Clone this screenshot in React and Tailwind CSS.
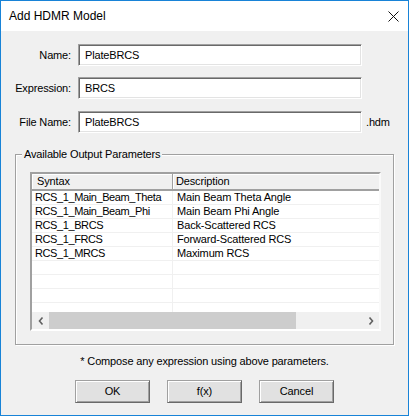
import React from "react";

const rows = [
  ["RCS_1_Main_Beam_Theta", "Main Beam Theta Angle"],
  ["RCS_1_Main_Beam_Phi", "Main Beam Phi Angle"],
  ["RCS_1_BRCS", "Back-Scattered RCS"],
  ["RCS_1_FRCS", "Forward-Scattered RCS"],
  ["RCS_1_MRCS", "Maximum RCS"],
  ["", ""],
  ["", ""],
  ["", ""],
  ["", ""],
];

const sunken =
  "border border-t-[#a0a0a0] border-l-[#a0a0a0] border-b-white border-r-white shadow-[inset_1px_1px_0_#696969,inset_-1px_-1px_0_#e3e3e3]";

function Field({ label, value, suffix }) {
  return (
    <div className="flex items-center">
      <div className="w-[70px] text-right">{label}</div>
      <div className={`ml-[7px] flex h-[22px] w-[284px] items-center bg-white pl-[6px] ${sunken}`}>{value}</div>
      {suffix && <div className="ml-[4px] pt-[1px]">{suffix}</div>}
    </div>
  );
}

function Arrow({ dir }) {
  return (
    <svg width="6" height="8" viewBox="0 0 6 8">
      {dir === "left" ? (
        <polyline points="4.5,0.5 1.5,4 4.5,7.5" fill="none" stroke="#606060" strokeWidth="1.6" />
      ) : (
        <polyline points="1.5,0.5 4.5,4 1.5,7.5" fill="none" stroke="#606060" strokeWidth="1.6" />
      )}
    </svg>
  );
}

function Button({ children }) {
  return (
    <button
      type="button"
      className="flex h-[23px] w-[75px] items-center justify-center border border-[#a0a0a0] border-b-[#696969] border-r-[#696969] bg-[#e1e1e1] shadow-[inset_1px_1px_0_#fff,inset_-1px_-1px_0_#a0a0a0]"
    >
      {children}
    </button>
  );
}

export default function App() {
  return (
    <div className="flex h-[416px] w-[409px] flex-col border border-[#1883d7] bg-[#f0f0f0] font-['Liberation_Sans',Arial,sans-serif] text-[11px] leading-[13px] tracking-[-0.15px] text-black">
      {/* title bar */}
      <div className="flex h-[30px] shrink-0 items-center justify-between bg-white pl-[8px] pr-[9px]">
        <span className="text-[12px] leading-[14px] tracking-normal">Add HDMR Model</span>
        <svg width="11" height="11" viewBox="0 0 11 11">
          <path d="M0.5 0.5 L10.5 10.5 M10.5 0.5 L0.5 10.5" stroke="#111" strokeWidth="1" />
        </svg>
      </div>

      {/* form */}
      <div className="pt-[13px]">
        <Field label="Name:" value="PlateBRCS" />
        <div className="mt-[11px]">
          <Field label="Expression:" value="BRCS" />
        </div>
        <div className="mt-[12px]">
          <Field label="File Name:" value="PlateBRCS" suffix=".hdm" />
        </div>
      </div>

      {/* group box */}
      <div className="relative mx-[14px] mt-[21px] h-[191px] border border-[#a0a0a0] pl-[14px] pt-[17px] shadow-[inset_1px_1px_0_#fff,1px_1px_0_#fff]">
        <span className="absolute -top-[7px] left-[6px] bg-[#f0f0f0] px-[2px]">Available Output Parameters</span>

        <div className="flex h-[159px] w-[351px] flex-col border-2 border-t-[#a0a0a0] border-l-[#a0a0a0] border-b-white border-r-[#fafafa] bg-white">
          {/* header */}
          <div className="flex h-[17px] shrink-0 border-b-2 border-[#a0a0a0] bg-[#f0f0f0]">
            <div className="flex w-[141px] items-center border-r border-[#a0a0a0] pl-[5px] shadow-[inset_1px_1px_0_#fff]">Syntax</div>
            <div className="flex flex-1 items-center pl-[3px] shadow-[inset_1px_1px_0_#fff]">Description</div>
          </div>

          {/* rows */}
          <div className="flex-1 overflow-hidden">
            {rows.map(([syntax, desc], i) => (
              <div key={i} className="flex h-[14px] border-b border-[#f0f0f0]">
                <div className="flex w-[141px] items-center overflow-hidden whitespace-nowrap border-r border-[#f0f0f0] pl-[3px] tracking-[-0.4px]">{syntax}</div>
                <div className="flex flex-1 items-center whitespace-nowrap pl-[4px]">{desc}</div>
              </div>
            ))}
          </div>

          {/* horizontal scrollbar */}
          <div className="flex h-[17px] shrink-0 bg-[#f0f0f0]">
            <div className="flex w-[17px] items-center justify-center">
              <Arrow dir="left" />
            </div>
            <div className="w-[247px] bg-[#cdcdcd]" />
            <div className="flex-1" />
            <div className="flex w-[17px] items-center justify-center">
              <Arrow dir="right" />
            </div>
          </div>
        </div>
      </div>

      <div className="mt-[10px] text-center">* Compose any expression using above parameters.</div>

      <div className="mt-[12px] flex justify-center gap-[17px]">
        <Button>OK</Button>
        <Button>f(x)</Button>
        <Button>Cancel</Button>
      </div>
    </div>
  );
}
